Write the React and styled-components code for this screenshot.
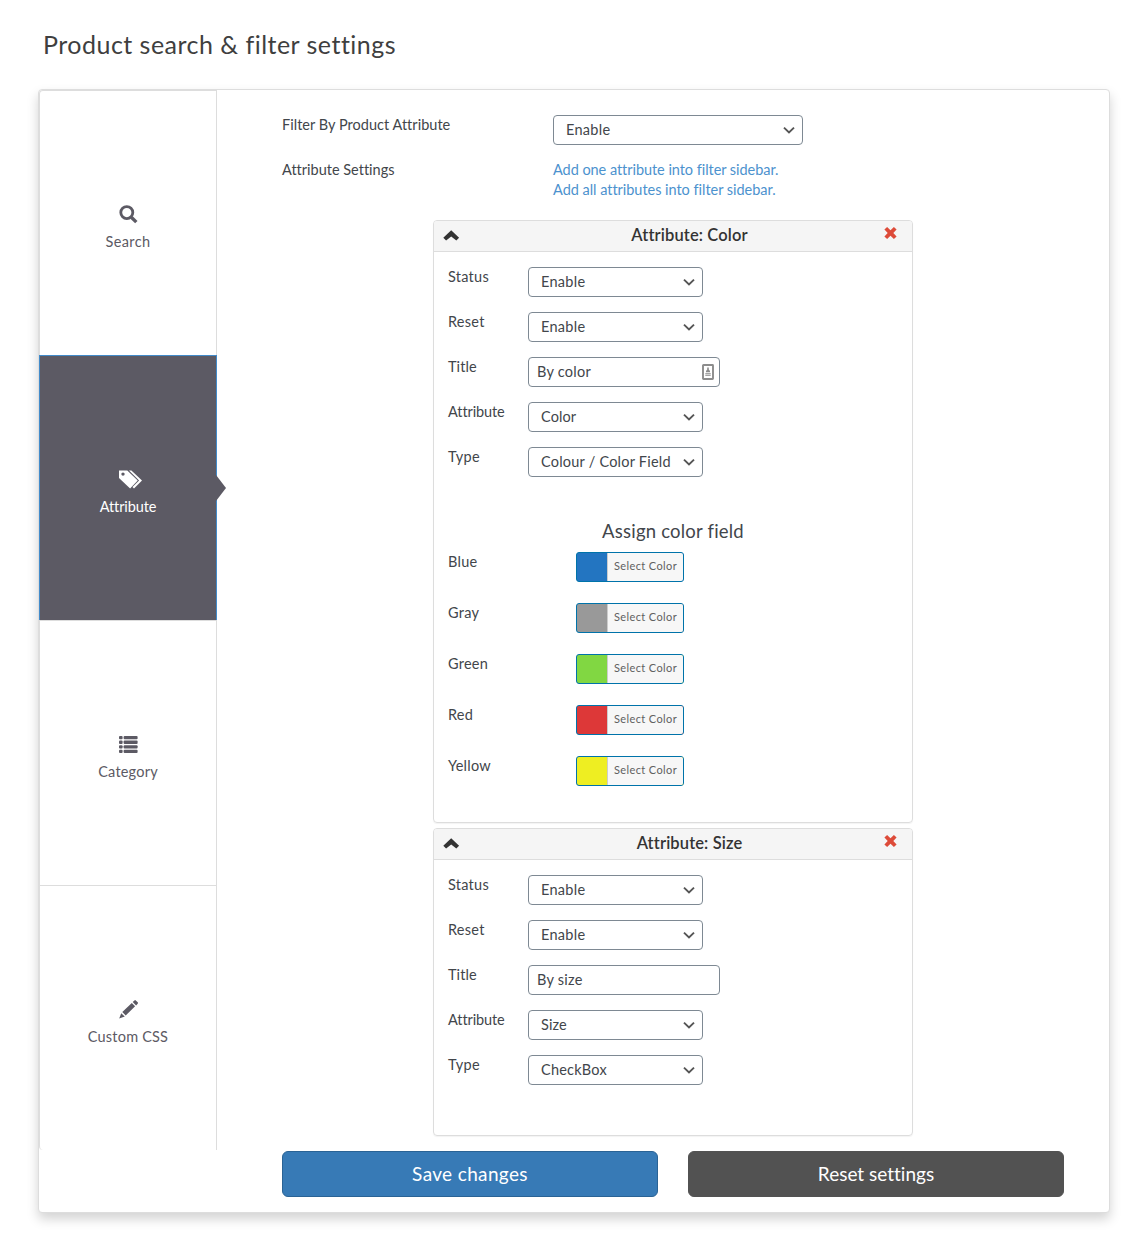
import React from "react";
import styled, { createGlobalStyle } from "styled-components";

const Global = createGlobalStyle`
  *, *::before, *::after { box-sizing: border-box; }
  body {
    margin: 0;
    background: #fff;
    color: #42464b;
    font: 400 14.5px/20px Lato, "Open Sans", sans-serif;
    font-variant-ligatures: none;
  }
  button, input { font-family: inherit; font-variant-ligatures: none; }
`;

const Page = styled.main`
  width: 1138px;
  height: 1243px;
  padding: 29px 28px 30px 38px;
`;
const Title = styled.h1`
  margin: 0 0 30px 5px;
  font-size: 25px;
  line-height: 30px;
  font-weight: 400;
  letter-spacing: 0.48px;
  color: #3f3f3f;
`;
const Text = styled.span`
  letter-spacing: ${(p) => p.$ls ?? 0.25}px;
  white-space: nowrap;
`;
const Panel = styled.div`
  display: flex;
  align-items: flex-start;
  height: 1124px;
  border: 1px solid #ddd;
  border-radius: 4px;
  background: #fff;
  box-shadow: 0 6px 12px rgba(0, 0, 0, 0.175);
`;
const Tabs = styled.nav`
  width: 178px;
  flex: none;
  display: flex;
  flex-direction: column;
`;
const Tab = styled.a`
  position: relative;
  height: 265px;
  padding-top: 114px;
  display: flex;
  flex-direction: column;
  align-items: center;
  gap: 8px;
  border: 1px solid ${(p) => (p.$active ? "#428bca" : "#ddd")};
  border-bottom: 0;
  color: ${(p) => (p.$active ? "#fff" : "#5c5a64")};
  background: ${(p) => (p.$active ? "#5c5a64" : "#fff")};
  &:first-child { border-top-left-radius: 4px; }
  &:last-child { border-bottom-left-radius: 4px; }
  ${(p) => p.$active && `&::after {
    content: "";
    position: absolute;
    left: 100%;
    top: 50%;
    margin-top: -13px;
    border-left: 10px solid #5c5a64;
    border-top: 13px solid transparent;
    border-bottom: 13px solid transparent;
  }`}
  svg { height: 19px; display: block; }
`;
const Content = styled.section`
  flex: 1;
  padding: 25px 45px 0 65px;
`;
const Setting = styled.div`
  display: grid;
  grid-template-columns: 271px 1fr;
  align-items: start;
  margin-bottom: ${(p) => p.$gap}px;
`;
const Links = styled.div`
  display: flex;
  flex-direction: column;
  align-items: flex-start;
  color: #4c92ce;
`;
const SelectBox = styled.div`
  width: ${(p) => p.$w}px;
  height: 30px;
  border: 1px solid #7e8993;
  border-radius: 4px;
  padding: 0 7px 0 12px;
  display: flex;
  align-items: center;
  justify-content: space-between;
  background: #fff;
`;
const InputBox = styled(SelectBox)`
  padding: 0 5px 0 8px;
`;
const Card = styled.article`
  width: 480px;
  height: ${(p) => p.$h}px;
  margin: 0 0 5px 151px;
  border: 1px solid #ddd;
  border-radius: 4px;
  box-shadow: 0 1px 1px rgba(0, 0, 0, 0.05);
`;
const CardHead = styled.header`
  height: 31px;
  display: grid;
  grid-template-columns: 42px 1fr 42px;
  align-items: center;
  padding: 0 0 3px;
  border-bottom: 1px solid #ddd;
  border-radius: 3px 3px 0 0;
  background: #f5f5f5;
`;
const CardTitle = styled.h2`
  margin: 0 0 0 33px;
  text-align: center;
  font-size: 16.5px;
  line-height: 20px;
  font-weight: 600;
  letter-spacing: 0.12px;
  color: #333;
`;
const Collapse = styled.span`
  padding: 1px 0 0 9px;
  display: flex;
`;
const Remove = styled.span`
  display: flex;
  padding: 0 0 4px 14px;
`;
const CardBody = styled.div`
  padding: 15px 15px 15px 14px;
`;
const Field = styled.div`
  display: grid;
  grid-template-columns: ${(p) => p.$col || 80}px 1fr;
  align-items: start;
  height: ${(p) => p.$h || 45}px;
`;
const SubTitle = styled.h3`
  margin: 29px 0 11px 1px;
  text-align: center;
  font-size: 18.5px;
  line-height: 20px;
  font-weight: 400;
  letter-spacing: 0.2px;
`;
const Picker = styled.button`
  width: 108px;
  height: 30px;
  padding: 0;
  display: flex;
  border: 1px solid #0073aa;
  border-radius: 3px;
  overflow: hidden;
  background: ${(p) => p.$c};
`;
const PickerLabel = styled.span`
  margin-left: 30px;
  flex: 1;
  height: 28px;
  border-left: 1px solid #ccc;
  background: #f7f7f7;
  color: #606060;
  font-size: 11px;
  line-height: 26px;
  text-align: center;
  white-space: nowrap;
  letter-spacing: 0.38px;
`;
const Actions = styled.div`
  display: grid;
  grid-template-columns: 1fr 1fr;
  gap: 30px;
  margin-top: 15px;
`;
const Action = styled.button`
  height: 46px;
  padding: 0 0 2px;
  border: 1px solid ${(p) => (p.$primary ? "#2a6395" : "#525252")};
  border-radius: 6px;
  background: ${(p) => (p.$primary ? "#377ab6" : "#525252")};
  color: #fff;
  font-size: 19px;
  letter-spacing: ${(p) => p.$ls || 0}px;
`;

const SearchIcon = () => (
  <svg width="19" height="19" viewBox="0 0 19 19" fill="none" stroke="currentColor">
    <circle cx="7.8" cy="7.6" r="6" strokeWidth="2.8" />
    <path d="M12.3 12.2l5 4.9" strokeWidth="3.4" />
  </svg>
);
const TagsGlyph = styled.svg`
  margin-left: 5px;
`;
const TagsIcon = () => (
  <TagsGlyph width="23" height="19" viewBox="0 0 23 19" fill="currentColor">
    <path fillRule="evenodd" d="M0 .5h8.3l10.4 10.1-7.6 7.9L0 8zM4 2.4a1.7 1.7 0 1 0 0 3.4 1.7 1.7 0 0 0 0-3.4z" />
    <path d="M10 .5h2.4L23 10.6l-8 7.9-1.5-1.4 6.6-6.5z" />
  </TagsGlyph>
);
const ListIcon = () => (
  <svg width="19" height="19" viewBox="0 0 19 19" fill="currentColor">
    {[1, 5.6, 10.2, 14.8].map((y) => (
      <React.Fragment key={y}>
        <rect x="0" y={y} width="3.6" height="3.3" rx="1" />
        <rect x="4.6" y={y} width="14" height="3.3" rx="1" />
      </React.Fragment>
    ))}
  </svg>
);
const PencilIcon = () => (
  <svg width="19" height="19" viewBox="0 0 19 19" fill="currentColor">
    <path d="M13.7 2L15.4.4q.8-.7 1.4 0l1.9 1.9q.6.6 0 1.4L17.1 5.4zM12.8 2.9l3.3 3.3-9.4 9.2-3.4-3.3zM2.2 13.2l3.6 3.4L.2 18.6z" />
  </svg>
);
const Chevron = () => (
  <svg width="12" height="8" viewBox="0 0 12 8" fill="none" stroke="#555" strokeWidth="1.9">
    <path d="M1 1.6l5 4.9 5-4.9" />
  </svg>
);
const UpIcon = () => (
  <svg width="17" height="11" viewBox="0 0 17 11" fill="#333">
    <path d="M8.2 .2L.3 7.8l2.8 2.8 5.1-4.1 5.1 4.1 2.8-2.8z" />
  </svg>
);
const RemoveIcon = () => (
  <svg width="13" height="12" viewBox="0 0 13 12" fill="#dd4b39">
    <path d="M3.1 0l3.4 3.2L9.9 0l2.7 2.6L9.3 6l3.3 3.4L9.9 12 6.5 8.8 3.1 12 .4 9.4 3.7 6 .4 2.6z" />
  </svg>
);
const AutofillIcon = () => (
  <svg width="12" height="16" viewBox="0 0 12 16">
    <rect x="1" y="1" width="10" height="14" rx=".5" fill="#fff" stroke="#8c8c8c" strokeWidth="1.9" />
    <path d="M5.2 3.5h1.6v2L8 7v1.2H4V7l1.2-1.5z" fill="#8c8c8c" />
    <path d="M3.3 9.6h5.4M3.3 11.4h5.4" stroke="#a5a5a5" strokeWidth="1.4" />
  </svg>
);

const Select = ({ w = 175, ls = 0.3, children }) => (
  <SelectBox $w={w}>
    <Text $ls={ls}>{children}</Text>
    <Chevron />
  </SelectBox>
);

const tabs = [
  ["Search", SearchIcon, 0.4],
  ["Attribute", TagsIcon, -0.1],
  ["Category", ListIcon, 0.2],
  ["Custom CSS", PencilIcon, 0.2],
];
const colors = [
  ["Blue", "#2375c1"],
  ["Gray", "#999999"],
  ["Green", "#81d742"],
  ["Red", "#dd3838"],
  ["Yellow", "#eeee22"],
];

const AttributeCard = ({ h, name, title, type, autofill, children }) => (
  <Card $h={h}>
    <CardHead>
      <Collapse><UpIcon /></Collapse>
      <CardTitle>Attribute: {name}</CardTitle>
      <Remove><RemoveIcon /></Remove>
    </CardHead>
    <CardBody>
      <Field><Text>Status</Text><Select>Enable</Select></Field>
      <Field><Text>Reset</Text><Select>Enable</Select></Field>
      <Field>
        <Text $ls={0.1}>Title</Text>
        <InputBox $w={192}><Text>{title}</Text>{autofill && <AutofillIcon />}</InputBox>
      </Field>
      <Field><Text $ls={-0.1}>Attribute</Text><Select ls={0.1}>{name}</Select></Field>
      <Field><Text $ls={0.4}>Type</Text><Select ls={0.22}>{type}</Select></Field>
      {children}
    </CardBody>
  </Card>
);

export default function App() {
  return (
    <Page>
      <Global />
      <Title>Product search &amp; filter settings</Title>
      <Panel>
        <Tabs>
          {tabs.map(([label, Icon, ls]) => (
            <Tab key={label} $active={label === "Attribute"}>
              <Icon />
              <Text $ls={ls}>{label}</Text>
            </Tab>
          ))}
        </Tabs>
        <Content>
          <Setting $gap={15}>
            <Text $ls={0.03}>Filter By Product Attribute</Text>
            <Select w={250}>Enable</Select>
          </Setting>
          <Setting $gap={20}>
            <Text $ls={0}>Attribute Settings</Text>
            <Links>
              <Text $ls={-0.05}>Add one attribute into filter sidebar.</Text>
              <Text $ls={-0.03}>Add all attributes into filter sidebar.</Text>
            </Links>
          </Setting>
          <AttributeCard h={603} name="Color" title="By color" type="Colour / Color Field" autofill>
            <SubTitle>Assign color field</SubTitle>
            {colors.map(([label, c]) => (
              <Field key={label} $col={128} $h={51}>
                <Text>{label}</Text>
                <Picker $c={c}><PickerLabel>Select Color</PickerLabel></Picker>
              </Field>
            ))}
          </AttributeCard>
          <AttributeCard h={308} name="Size" title="By size" type="CheckBox" />
          <Actions>
            <Action $primary $ls={0.35}>Save changes</Action>
            <Action>Reset settings</Action>
          </Actions>
        </Content>
      </Panel>
    </Page>
  );
}
